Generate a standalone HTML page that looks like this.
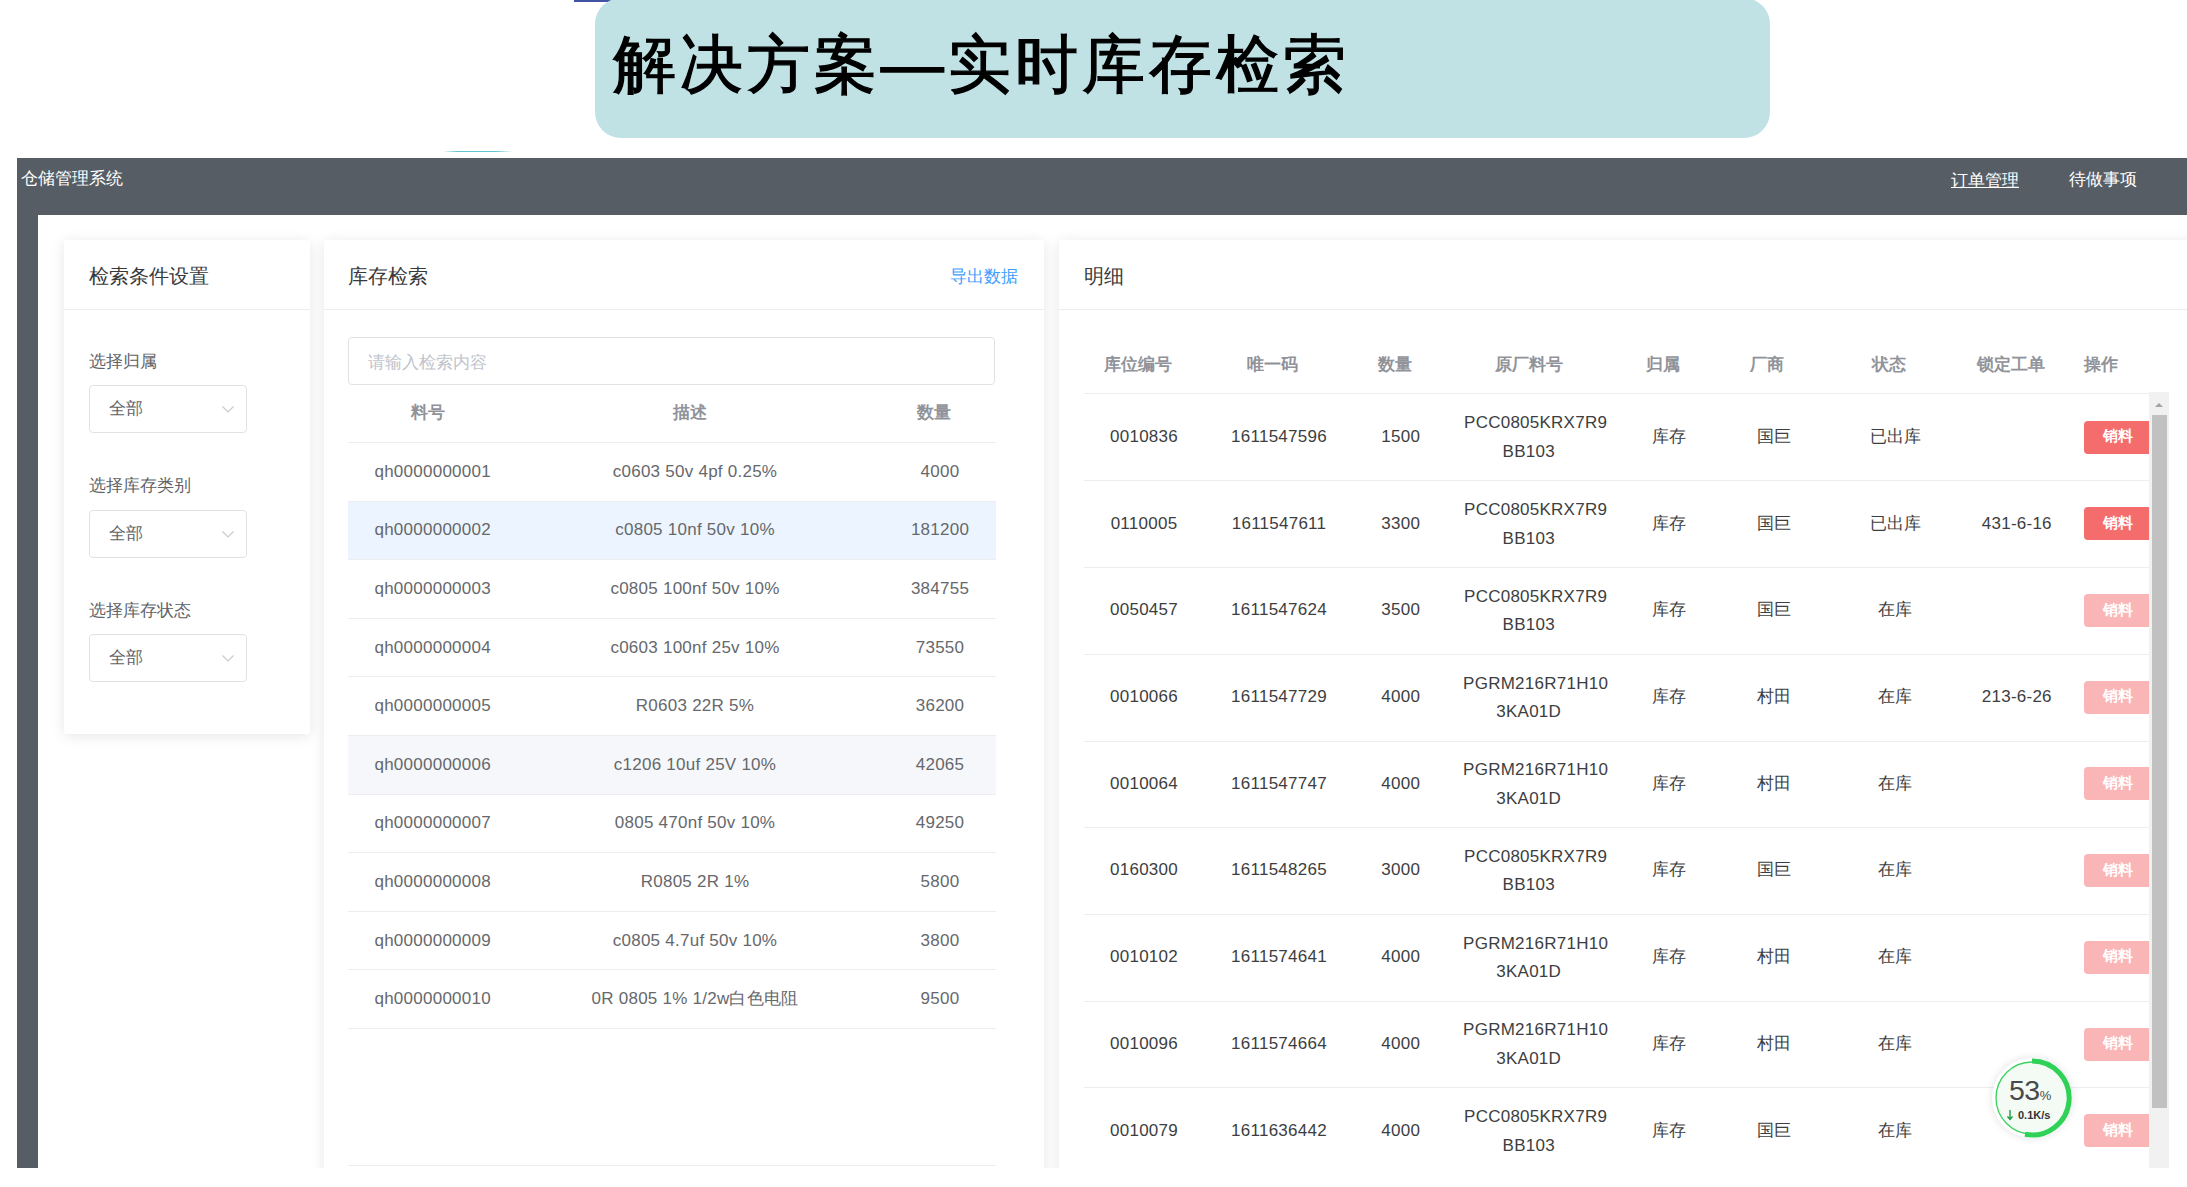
<!DOCTYPE html>
<html><head><meta charset="utf-8"><style>
html,body{margin:0;padding:0;}
body{width:2187px;height:1187px;position:relative;overflow:hidden;background:#fff;font-family:"Liberation Sans", sans-serif;}
.t{position:absolute;white-space:nowrap;letter-spacing:0.25px;}
</style></head><body>
<div style="position:absolute;left:574px;top:0px;width:40px;height:2px;background:#4353a3;"></div>
<div style="position:absolute;left:595px;top:-2px;width:1175px;height:140px;background:#c0e2e5;border-radius:26px;"></div>
<div class="t" style="left:613px;top:24.0px;line-height:80px;font-size:63px;color:#000;font-weight:normal;letter-spacing:3.95px;-webkit-text-stroke:1.3px #000;">解决方案—实时库存检索</div>
<div style="position:absolute;left:443px;top:151px;width:70px;height:1px;background:linear-gradient(90deg,rgba(120,220,235,0),#63c3cf 20%,#63c3cf 75%,rgba(120,220,235,0));"></div>
<div style="position:absolute;left:17px;top:158px;width:2170px;height:57px;background:#565d65;"></div>
<div style="position:absolute;left:17px;top:158px;width:21px;height:1010px;background:#565d65;"></div>
<div class="t" style="left:20.5px;top:166.5px;line-height:24px;font-size:17px;color:#fff;font-weight:normal;letter-spacing:0;">仓储管理系统</div>
<div class="t" style="left:1951px;top:168.5px;line-height:24px;font-size:17px;color:#fff;font-weight:normal;letter-spacing:0;"><u>订单管理</u></div>
<div class="t" style="left:2068.5px;top:167.5px;line-height:24px;font-size:17px;color:#fff;font-weight:normal;letter-spacing:0;">待做事项</div>
<div style="position:absolute;left:64px;top:240px;width:246px;height:494px;background:#fff;box-shadow:0 2px 14px rgba(0,0,0,0.10);border-radius:2px;"></div>
<div style="position:absolute;left:324px;top:240px;width:720px;height:960px;background:#fff;box-shadow:0 2px 14px rgba(0,0,0,0.10);border-radius:2px;"></div>
<div style="position:absolute;left:1059px;top:240px;width:1200px;height:960px;background:#fff;box-shadow:0 2px 14px rgba(0,0,0,0.10);border-radius:2px;"></div>
<div style="position:absolute;left:64px;top:309px;width:246px;height:1px;background:#ebedf0;"></div>
<div style="position:absolute;left:324px;top:309px;width:720px;height:1px;background:#ebedf0;"></div>
<div style="position:absolute;left:1058px;top:309px;width:1129px;height:1px;background:#ebedf0;"></div>
<div class="t" style="left:89px;top:262.0px;line-height:28px;font-size:19.5px;color:#38393b;font-weight:normal;letter-spacing:0;">检索条件设置</div>
<div class="t" style="left:348px;top:262.0px;line-height:28px;font-size:19.5px;color:#38393b;font-weight:normal;letter-spacing:0;">库存检索</div>
<div class="t" style="left:950px;top:264.8px;line-height:24px;font-size:17px;color:#409eff;font-weight:normal;letter-spacing:0;">导出数据</div>
<div class="t" style="left:1084px;top:262.0px;line-height:28px;font-size:19.5px;color:#38393b;font-weight:normal;letter-spacing:0;">明细</div>
<div class="t" style="left:89px;top:349.5px;line-height:24px;font-size:17px;color:#606266;font-weight:normal;letter-spacing:0;">选择归属</div>
<div style="position:absolute;left:89px;top:385px;width:158px;height:48px;border:1px solid #e0e2e6;border-radius:4px;box-sizing:border-box;background:#fff;"></div>
<div class="t" style="left:109px;top:397.0px;line-height:24px;font-size:17px;color:#606266;font-weight:normal;letter-spacing:0;">全部</div>
<svg style="position:absolute;left:221px;top:405.0px" width="14" height="9" viewBox="0 0 14 9"><path d="M1.5 1.5 L7 7 L12.5 1.5" stroke="#c8cbd0" stroke-width="1.2" fill="none"/></svg>
<div class="t" style="left:89px;top:474.2px;line-height:24px;font-size:17px;color:#606266;font-weight:normal;letter-spacing:0;">选择库存类别</div>
<div style="position:absolute;left:89px;top:510px;width:158px;height:48px;border:1px solid #e0e2e6;border-radius:4px;box-sizing:border-box;background:#fff;"></div>
<div class="t" style="left:109px;top:521.7px;line-height:24px;font-size:17px;color:#606266;font-weight:normal;letter-spacing:0;">全部</div>
<svg style="position:absolute;left:221px;top:529.7px" width="14" height="9" viewBox="0 0 14 9"><path d="M1.5 1.5 L7 7 L12.5 1.5" stroke="#c8cbd0" stroke-width="1.2" fill="none"/></svg>
<div class="t" style="left:89px;top:598.9px;line-height:24px;font-size:17px;color:#606266;font-weight:normal;letter-spacing:0;">选择库存状态</div>
<div style="position:absolute;left:89px;top:634px;width:158px;height:48px;border:1px solid #e0e2e6;border-radius:4px;box-sizing:border-box;background:#fff;"></div>
<div class="t" style="left:109px;top:646.4px;line-height:24px;font-size:17px;color:#606266;font-weight:normal;letter-spacing:0;">全部</div>
<svg style="position:absolute;left:221px;top:654.4px" width="14" height="9" viewBox="0 0 14 9"><path d="M1.5 1.5 L7 7 L12.5 1.5" stroke="#c8cbd0" stroke-width="1.2" fill="none"/></svg>
<div style="position:absolute;left:348px;top:337px;width:647px;height:48px;border:1px solid #e0e2e6;border-radius:4px;box-sizing:border-box;background:#fff;"></div>
<div class="t" style="left:368px;top:350.5px;line-height:24px;font-size:17px;color:#c0c4cc;font-weight:normal;letter-spacing:0;">请输入检索内容</div>
<div class="t" style="left:427.5px;top:399.5px;line-height:25px;font-size:17px;color:#909399;font-weight:bold;transform:translateX(-50%);letter-spacing:0;">料号</div>
<div class="t" style="left:690px;top:399.5px;line-height:25px;font-size:17px;color:#909399;font-weight:bold;transform:translateX(-50%);letter-spacing:0;">描述</div>
<div class="t" style="left:934px;top:399.5px;line-height:25px;font-size:17px;color:#909399;font-weight:bold;transform:translateX(-50%);letter-spacing:0;">数量</div>
<div style="position:absolute;left:348px;top:442px;width:648px;height:1px;background:#ebedf0;"></div>
<div style="position:absolute;left:348px;top:501px;width:648px;height:1px;background:#ebedf0;"></div>
<div class="t" style="left:432.7px;top:458.8px;line-height:25px;font-size:17px;color:#66686c;font-weight:normal;transform:translateX(-50%);">qh0000000001</div>
<div class="t" style="left:695px;top:458.8px;line-height:25px;font-size:17px;color:#66686c;font-weight:normal;transform:translateX(-50%);">c0603 50v 4pf 0.25%</div>
<div class="t" style="left:940px;top:458.8px;line-height:25px;font-size:17px;color:#66686c;font-weight:normal;transform:translateX(-50%);">4000</div>
<div style="position:absolute;left:348px;top:502px;width:648px;height:58px;background:#ecf5ff;"></div>
<div style="position:absolute;left:348px;top:559px;width:648px;height:1px;background:#ebedf0;"></div>
<div class="t" style="left:432.7px;top:517.4px;line-height:25px;font-size:17px;color:#66686c;font-weight:normal;transform:translateX(-50%);">qh0000000002</div>
<div class="t" style="left:695px;top:517.4px;line-height:25px;font-size:17px;color:#66686c;font-weight:normal;transform:translateX(-50%);">c0805 10nf 50v 10%</div>
<div class="t" style="left:940px;top:517.4px;line-height:25px;font-size:17px;color:#66686c;font-weight:normal;transform:translateX(-50%);">181200</div>
<div style="position:absolute;left:348px;top:618px;width:648px;height:1px;background:#ebedf0;"></div>
<div class="t" style="left:432.7px;top:576.0px;line-height:25px;font-size:17px;color:#66686c;font-weight:normal;transform:translateX(-50%);">qh0000000003</div>
<div class="t" style="left:695px;top:576.0px;line-height:25px;font-size:17px;color:#66686c;font-weight:normal;transform:translateX(-50%);">c0805 100nf 50v 10%</div>
<div class="t" style="left:940px;top:576.0px;line-height:25px;font-size:17px;color:#66686c;font-weight:normal;transform:translateX(-50%);">384755</div>
<div style="position:absolute;left:348px;top:676px;width:648px;height:1px;background:#ebedf0;"></div>
<div class="t" style="left:432.7px;top:634.6px;line-height:25px;font-size:17px;color:#66686c;font-weight:normal;transform:translateX(-50%);">qh0000000004</div>
<div class="t" style="left:695px;top:634.6px;line-height:25px;font-size:17px;color:#66686c;font-weight:normal;transform:translateX(-50%);">c0603 100nf 25v 10%</div>
<div class="t" style="left:940px;top:634.6px;line-height:25px;font-size:17px;color:#66686c;font-weight:normal;transform:translateX(-50%);">73550</div>
<div style="position:absolute;left:348px;top:735px;width:648px;height:1px;background:#ebedf0;"></div>
<div class="t" style="left:432.7px;top:693.2px;line-height:25px;font-size:17px;color:#66686c;font-weight:normal;transform:translateX(-50%);">qh0000000005</div>
<div class="t" style="left:695px;top:693.2px;line-height:25px;font-size:17px;color:#66686c;font-weight:normal;transform:translateX(-50%);">R0603 22R 5%</div>
<div class="t" style="left:940px;top:693.2px;line-height:25px;font-size:17px;color:#66686c;font-weight:normal;transform:translateX(-50%);">36200</div>
<div style="position:absolute;left:348px;top:736px;width:648px;height:59px;background:#f5f7fa;"></div>
<div style="position:absolute;left:348px;top:794px;width:648px;height:1px;background:#ebedf0;"></div>
<div class="t" style="left:432.7px;top:751.8px;line-height:25px;font-size:17px;color:#66686c;font-weight:normal;transform:translateX(-50%);">qh0000000006</div>
<div class="t" style="left:695px;top:751.8px;line-height:25px;font-size:17px;color:#66686c;font-weight:normal;transform:translateX(-50%);">c1206 10uf 25V 10%</div>
<div class="t" style="left:940px;top:751.8px;line-height:25px;font-size:17px;color:#66686c;font-weight:normal;transform:translateX(-50%);">42065</div>
<div style="position:absolute;left:348px;top:852px;width:648px;height:1px;background:#ebedf0;"></div>
<div class="t" style="left:432.7px;top:810.4px;line-height:25px;font-size:17px;color:#66686c;font-weight:normal;transform:translateX(-50%);">qh0000000007</div>
<div class="t" style="left:695px;top:810.4px;line-height:25px;font-size:17px;color:#66686c;font-weight:normal;transform:translateX(-50%);">0805 470nf 50v 10%</div>
<div class="t" style="left:940px;top:810.4px;line-height:25px;font-size:17px;color:#66686c;font-weight:normal;transform:translateX(-50%);">49250</div>
<div style="position:absolute;left:348px;top:911px;width:648px;height:1px;background:#ebedf0;"></div>
<div class="t" style="left:432.7px;top:869.0px;line-height:25px;font-size:17px;color:#66686c;font-weight:normal;transform:translateX(-50%);">qh0000000008</div>
<div class="t" style="left:695px;top:869.0px;line-height:25px;font-size:17px;color:#66686c;font-weight:normal;transform:translateX(-50%);">R0805 2R 1%</div>
<div class="t" style="left:940px;top:869.0px;line-height:25px;font-size:17px;color:#66686c;font-weight:normal;transform:translateX(-50%);">5800</div>
<div style="position:absolute;left:348px;top:969px;width:648px;height:1px;background:#ebedf0;"></div>
<div class="t" style="left:432.7px;top:927.6px;line-height:25px;font-size:17px;color:#66686c;font-weight:normal;transform:translateX(-50%);">qh0000000009</div>
<div class="t" style="left:695px;top:927.6px;line-height:25px;font-size:17px;color:#66686c;font-weight:normal;transform:translateX(-50%);">c0805 4.7uf 50v 10%</div>
<div class="t" style="left:940px;top:927.6px;line-height:25px;font-size:17px;color:#66686c;font-weight:normal;transform:translateX(-50%);">3800</div>
<div style="position:absolute;left:348px;top:1028px;width:648px;height:1px;background:#ebedf0;"></div>
<div class="t" style="left:432.7px;top:986.2px;line-height:25px;font-size:17px;color:#66686c;font-weight:normal;transform:translateX(-50%);">qh0000000010</div>
<div class="t" style="left:695px;top:986.2px;line-height:25px;font-size:17px;color:#66686c;font-weight:normal;transform:translateX(-50%);">0R 0805 1% 1/2w白色电阻</div>
<div class="t" style="left:940px;top:986.2px;line-height:25px;font-size:17px;color:#66686c;font-weight:normal;transform:translateX(-50%);">9500</div>
<div style="position:absolute;left:348px;top:1165px;width:648px;height:1px;background:#ebedf0;"></div>
<div class="t" style="left:1138px;top:351.5px;line-height:25px;font-size:17px;color:#909399;font-weight:bold;transform:translateX(-50%);letter-spacing:0;">库位编号</div>
<div class="t" style="left:1272px;top:351.5px;line-height:25px;font-size:17px;color:#909399;font-weight:bold;transform:translateX(-50%);letter-spacing:0;">唯一码</div>
<div class="t" style="left:1394.5px;top:351.5px;line-height:25px;font-size:17px;color:#909399;font-weight:bold;transform:translateX(-50%);letter-spacing:0;">数量</div>
<div class="t" style="left:1529px;top:351.5px;line-height:25px;font-size:17px;color:#909399;font-weight:bold;transform:translateX(-50%);letter-spacing:0;">原厂料号</div>
<div class="t" style="left:1663px;top:351.5px;line-height:25px;font-size:17px;color:#909399;font-weight:bold;transform:translateX(-50%);letter-spacing:0;">归属</div>
<div class="t" style="left:1767px;top:351.5px;line-height:25px;font-size:17px;color:#909399;font-weight:bold;transform:translateX(-50%);letter-spacing:0;">厂商</div>
<div class="t" style="left:1888.8px;top:351.5px;line-height:25px;font-size:17px;color:#909399;font-weight:bold;transform:translateX(-50%);letter-spacing:0;">状态</div>
<div class="t" style="left:2011px;top:351.5px;line-height:25px;font-size:17px;color:#909399;font-weight:bold;transform:translateX(-50%);letter-spacing:0;">锁定工单</div>
<div class="t" style="left:2084px;top:351.5px;line-height:25px;font-size:17px;color:#909399;font-weight:bold;letter-spacing:0;">操作</div>
<div style="position:absolute;left:1084px;top:393px;width:1066px;height:1px;background:#ebedf0;"></div>
<div style="position:absolute;left:1084px;top:480px;width:1065px;height:1px;background:#ebedf0;"></div>
<div class="t" style="left:1144px;top:423.9px;line-height:25px;font-size:17px;color:#3d3e41;font-weight:normal;transform:translateX(-50%);">0010836</div>
<div class="t" style="left:1279px;top:423.9px;line-height:25px;font-size:17px;color:#3d3e41;font-weight:normal;transform:translateX(-50%);">1611547596</div>
<div class="t" style="left:1400.7px;top:423.9px;line-height:25px;font-size:17px;color:#3d3e41;font-weight:normal;transform:translateX(-50%);">1500</div>
<div class="t" style="left:1535.6px;top:410.4px;line-height:25px;font-size:17px;color:#3d3e41;font-weight:normal;transform:translateX(-50%);">PCC0805KRX7R9</div>
<div class="t" style="left:1528.7px;top:439.0px;line-height:25px;font-size:17px;color:#3d3e41;font-weight:normal;transform:translateX(-50%);">BB103</div>
<div class="t" style="left:1669px;top:423.9px;line-height:25px;font-size:17px;color:#3d3e41;font-weight:normal;transform:translateX(-50%);letter-spacing:0;">库存</div>
<div class="t" style="left:1773.5px;top:423.9px;line-height:25px;font-size:17px;color:#3d3e41;font-weight:normal;transform:translateX(-50%);letter-spacing:0;">国巨</div>
<div class="t" style="left:1895px;top:423.9px;line-height:25px;font-size:17px;color:#3d3e41;font-weight:normal;transform:translateX(-50%);letter-spacing:0;">已出库</div>
<div style="position:absolute;left:2084px;top:421px;width:70px;height:33px;background:#f56c6c;border-radius:4px;"></div>
<div class="t" style="left:2118px;top:426.2px;line-height:21px;font-size:14.5px;color:#fff;font-weight:600;transform:translateX(-50%);letter-spacing:0;">销料</div>
<div style="position:absolute;left:1084px;top:567px;width:1065px;height:1px;background:#ebedf0;"></div>
<div class="t" style="left:1144px;top:510.6px;line-height:25px;font-size:17px;color:#3d3e41;font-weight:normal;transform:translateX(-50%);">0110005</div>
<div class="t" style="left:1279px;top:510.6px;line-height:25px;font-size:17px;color:#3d3e41;font-weight:normal;transform:translateX(-50%);">1611547611</div>
<div class="t" style="left:1400.7px;top:510.6px;line-height:25px;font-size:17px;color:#3d3e41;font-weight:normal;transform:translateX(-50%);">3300</div>
<div class="t" style="left:1535.6px;top:497.1px;line-height:25px;font-size:17px;color:#3d3e41;font-weight:normal;transform:translateX(-50%);">PCC0805KRX7R9</div>
<div class="t" style="left:1528.7px;top:525.6px;line-height:25px;font-size:17px;color:#3d3e41;font-weight:normal;transform:translateX(-50%);">BB103</div>
<div class="t" style="left:1669px;top:510.6px;line-height:25px;font-size:17px;color:#3d3e41;font-weight:normal;transform:translateX(-50%);letter-spacing:0;">库存</div>
<div class="t" style="left:1773.5px;top:510.6px;line-height:25px;font-size:17px;color:#3d3e41;font-weight:normal;transform:translateX(-50%);letter-spacing:0;">国巨</div>
<div class="t" style="left:1895px;top:510.6px;line-height:25px;font-size:17px;color:#3d3e41;font-weight:normal;transform:translateX(-50%);letter-spacing:0;">已出库</div>
<div class="t" style="left:2016.8px;top:510.6px;line-height:25px;font-size:17px;color:#3d3e41;font-weight:normal;transform:translateX(-50%);">431-6-16</div>
<div style="position:absolute;left:2084px;top:507px;width:70px;height:33px;background:#f56c6c;border-radius:4px;"></div>
<div class="t" style="left:2118px;top:512.9px;line-height:21px;font-size:14.5px;color:#fff;font-weight:600;transform:translateX(-50%);letter-spacing:0;">销料</div>
<div style="position:absolute;left:1084px;top:654px;width:1065px;height:1px;background:#ebedf0;"></div>
<div class="t" style="left:1144px;top:597.3px;line-height:25px;font-size:17px;color:#3d3e41;font-weight:normal;transform:translateX(-50%);">0050457</div>
<div class="t" style="left:1279px;top:597.3px;line-height:25px;font-size:17px;color:#3d3e41;font-weight:normal;transform:translateX(-50%);">1611547624</div>
<div class="t" style="left:1400.7px;top:597.3px;line-height:25px;font-size:17px;color:#3d3e41;font-weight:normal;transform:translateX(-50%);">3500</div>
<div class="t" style="left:1535.6px;top:583.8px;line-height:25px;font-size:17px;color:#3d3e41;font-weight:normal;transform:translateX(-50%);">PCC0805KRX7R9</div>
<div class="t" style="left:1528.7px;top:612.4px;line-height:25px;font-size:17px;color:#3d3e41;font-weight:normal;transform:translateX(-50%);">BB103</div>
<div class="t" style="left:1669px;top:597.3px;line-height:25px;font-size:17px;color:#3d3e41;font-weight:normal;transform:translateX(-50%);letter-spacing:0;">库存</div>
<div class="t" style="left:1773.5px;top:597.3px;line-height:25px;font-size:17px;color:#3d3e41;font-weight:normal;transform:translateX(-50%);letter-spacing:0;">国巨</div>
<div class="t" style="left:1895px;top:597.3px;line-height:25px;font-size:17px;color:#3d3e41;font-weight:normal;transform:translateX(-50%);letter-spacing:0;">在库</div>
<div style="position:absolute;left:2084px;top:594px;width:70px;height:33px;background:#fab6b6;border-radius:4px;"></div>
<div class="t" style="left:2118px;top:599.6px;line-height:21px;font-size:14.5px;color:#fff;font-weight:600;transform:translateX(-50%);letter-spacing:0;">销料</div>
<div style="position:absolute;left:1084px;top:741px;width:1065px;height:1px;background:#ebedf0;"></div>
<div class="t" style="left:1144px;top:684.0px;line-height:25px;font-size:17px;color:#3d3e41;font-weight:normal;transform:translateX(-50%);">0010066</div>
<div class="t" style="left:1279px;top:684.0px;line-height:25px;font-size:17px;color:#3d3e41;font-weight:normal;transform:translateX(-50%);">1611547729</div>
<div class="t" style="left:1400.7px;top:684.0px;line-height:25px;font-size:17px;color:#3d3e41;font-weight:normal;transform:translateX(-50%);">4000</div>
<div class="t" style="left:1535.6px;top:670.5px;line-height:25px;font-size:17px;color:#3d3e41;font-weight:normal;transform:translateX(-50%);">PGRM216R71H10</div>
<div class="t" style="left:1528.7px;top:699.1px;line-height:25px;font-size:17px;color:#3d3e41;font-weight:normal;transform:translateX(-50%);">3KA01D</div>
<div class="t" style="left:1669px;top:684.0px;line-height:25px;font-size:17px;color:#3d3e41;font-weight:normal;transform:translateX(-50%);letter-spacing:0;">库存</div>
<div class="t" style="left:1773.5px;top:684.0px;line-height:25px;font-size:17px;color:#3d3e41;font-weight:normal;transform:translateX(-50%);letter-spacing:0;">村田</div>
<div class="t" style="left:1895px;top:684.0px;line-height:25px;font-size:17px;color:#3d3e41;font-weight:normal;transform:translateX(-50%);letter-spacing:0;">在库</div>
<div class="t" style="left:2016.8px;top:684.0px;line-height:25px;font-size:17px;color:#3d3e41;font-weight:normal;transform:translateX(-50%);">213-6-26</div>
<div style="position:absolute;left:2084px;top:681px;width:70px;height:33px;background:#fab6b6;border-radius:4px;"></div>
<div class="t" style="left:2118px;top:686.3px;line-height:21px;font-size:14.5px;color:#fff;font-weight:600;transform:translateX(-50%);letter-spacing:0;">销料</div>
<div style="position:absolute;left:1084px;top:827px;width:1065px;height:1px;background:#ebedf0;"></div>
<div class="t" style="left:1144px;top:770.7px;line-height:25px;font-size:17px;color:#3d3e41;font-weight:normal;transform:translateX(-50%);">0010064</div>
<div class="t" style="left:1279px;top:770.7px;line-height:25px;font-size:17px;color:#3d3e41;font-weight:normal;transform:translateX(-50%);">1611547747</div>
<div class="t" style="left:1400.7px;top:770.7px;line-height:25px;font-size:17px;color:#3d3e41;font-weight:normal;transform:translateX(-50%);">4000</div>
<div class="t" style="left:1535.6px;top:757.2px;line-height:25px;font-size:17px;color:#3d3e41;font-weight:normal;transform:translateX(-50%);">PGRM216R71H10</div>
<div class="t" style="left:1528.7px;top:785.8px;line-height:25px;font-size:17px;color:#3d3e41;font-weight:normal;transform:translateX(-50%);">3KA01D</div>
<div class="t" style="left:1669px;top:770.7px;line-height:25px;font-size:17px;color:#3d3e41;font-weight:normal;transform:translateX(-50%);letter-spacing:0;">库存</div>
<div class="t" style="left:1773.5px;top:770.7px;line-height:25px;font-size:17px;color:#3d3e41;font-weight:normal;transform:translateX(-50%);letter-spacing:0;">村田</div>
<div class="t" style="left:1895px;top:770.7px;line-height:25px;font-size:17px;color:#3d3e41;font-weight:normal;transform:translateX(-50%);letter-spacing:0;">在库</div>
<div style="position:absolute;left:2084px;top:767px;width:70px;height:33px;background:#fab6b6;border-radius:4px;"></div>
<div class="t" style="left:2118px;top:773.0px;line-height:21px;font-size:14.5px;color:#fff;font-weight:600;transform:translateX(-50%);letter-spacing:0;">销料</div>
<div style="position:absolute;left:1084px;top:914px;width:1065px;height:1px;background:#ebedf0;"></div>
<div class="t" style="left:1144px;top:857.4px;line-height:25px;font-size:17px;color:#3d3e41;font-weight:normal;transform:translateX(-50%);">0160300</div>
<div class="t" style="left:1279px;top:857.4px;line-height:25px;font-size:17px;color:#3d3e41;font-weight:normal;transform:translateX(-50%);">1611548265</div>
<div class="t" style="left:1400.7px;top:857.4px;line-height:25px;font-size:17px;color:#3d3e41;font-weight:normal;transform:translateX(-50%);">3000</div>
<div class="t" style="left:1535.6px;top:843.9px;line-height:25px;font-size:17px;color:#3d3e41;font-weight:normal;transform:translateX(-50%);">PCC0805KRX7R9</div>
<div class="t" style="left:1528.7px;top:872.4px;line-height:25px;font-size:17px;color:#3d3e41;font-weight:normal;transform:translateX(-50%);">BB103</div>
<div class="t" style="left:1669px;top:857.4px;line-height:25px;font-size:17px;color:#3d3e41;font-weight:normal;transform:translateX(-50%);letter-spacing:0;">库存</div>
<div class="t" style="left:1773.5px;top:857.4px;line-height:25px;font-size:17px;color:#3d3e41;font-weight:normal;transform:translateX(-50%);letter-spacing:0;">国巨</div>
<div class="t" style="left:1895px;top:857.4px;line-height:25px;font-size:17px;color:#3d3e41;font-weight:normal;transform:translateX(-50%);letter-spacing:0;">在库</div>
<div style="position:absolute;left:2084px;top:854px;width:70px;height:33px;background:#fab6b6;border-radius:4px;"></div>
<div class="t" style="left:2118px;top:859.6px;line-height:21px;font-size:14.5px;color:#fff;font-weight:600;transform:translateX(-50%);letter-spacing:0;">销料</div>
<div style="position:absolute;left:1084px;top:1001px;width:1065px;height:1px;background:#ebedf0;"></div>
<div class="t" style="left:1144px;top:944.1px;line-height:25px;font-size:17px;color:#3d3e41;font-weight:normal;transform:translateX(-50%);">0010102</div>
<div class="t" style="left:1279px;top:944.1px;line-height:25px;font-size:17px;color:#3d3e41;font-weight:normal;transform:translateX(-50%);">1611574641</div>
<div class="t" style="left:1400.7px;top:944.1px;line-height:25px;font-size:17px;color:#3d3e41;font-weight:normal;transform:translateX(-50%);">4000</div>
<div class="t" style="left:1535.6px;top:930.6px;line-height:25px;font-size:17px;color:#3d3e41;font-weight:normal;transform:translateX(-50%);">PGRM216R71H10</div>
<div class="t" style="left:1528.7px;top:959.1px;line-height:25px;font-size:17px;color:#3d3e41;font-weight:normal;transform:translateX(-50%);">3KA01D</div>
<div class="t" style="left:1669px;top:944.1px;line-height:25px;font-size:17px;color:#3d3e41;font-weight:normal;transform:translateX(-50%);letter-spacing:0;">库存</div>
<div class="t" style="left:1773.5px;top:944.1px;line-height:25px;font-size:17px;color:#3d3e41;font-weight:normal;transform:translateX(-50%);letter-spacing:0;">村田</div>
<div class="t" style="left:1895px;top:944.1px;line-height:25px;font-size:17px;color:#3d3e41;font-weight:normal;transform:translateX(-50%);letter-spacing:0;">在库</div>
<div style="position:absolute;left:2084px;top:941px;width:70px;height:33px;background:#fab6b6;border-radius:4px;"></div>
<div class="t" style="left:2118px;top:946.4px;line-height:21px;font-size:14.5px;color:#fff;font-weight:600;transform:translateX(-50%);letter-spacing:0;">销料</div>
<div style="position:absolute;left:1084px;top:1087px;width:1065px;height:1px;background:#ebedf0;"></div>
<div class="t" style="left:1144px;top:1030.8px;line-height:25px;font-size:17px;color:#3d3e41;font-weight:normal;transform:translateX(-50%);">0010096</div>
<div class="t" style="left:1279px;top:1030.8px;line-height:25px;font-size:17px;color:#3d3e41;font-weight:normal;transform:translateX(-50%);">1611574664</div>
<div class="t" style="left:1400.7px;top:1030.8px;line-height:25px;font-size:17px;color:#3d3e41;font-weight:normal;transform:translateX(-50%);">4000</div>
<div class="t" style="left:1535.6px;top:1017.2px;line-height:25px;font-size:17px;color:#3d3e41;font-weight:normal;transform:translateX(-50%);">PGRM216R71H10</div>
<div class="t" style="left:1528.7px;top:1045.8px;line-height:25px;font-size:17px;color:#3d3e41;font-weight:normal;transform:translateX(-50%);">3KA01D</div>
<div class="t" style="left:1669px;top:1030.8px;line-height:25px;font-size:17px;color:#3d3e41;font-weight:normal;transform:translateX(-50%);letter-spacing:0;">库存</div>
<div class="t" style="left:1773.5px;top:1030.8px;line-height:25px;font-size:17px;color:#3d3e41;font-weight:normal;transform:translateX(-50%);letter-spacing:0;">村田</div>
<div class="t" style="left:1895px;top:1030.8px;line-height:25px;font-size:17px;color:#3d3e41;font-weight:normal;transform:translateX(-50%);letter-spacing:0;">在库</div>
<div style="position:absolute;left:2084px;top:1028px;width:70px;height:33px;background:#fab6b6;border-radius:4px;"></div>
<div class="t" style="left:2118px;top:1033.0px;line-height:21px;font-size:14.5px;color:#fff;font-weight:600;transform:translateX(-50%);letter-spacing:0;">销料</div>
<div class="t" style="left:1144px;top:1117.5px;line-height:25px;font-size:17px;color:#3d3e41;font-weight:normal;transform:translateX(-50%);">0010079</div>
<div class="t" style="left:1279px;top:1117.5px;line-height:25px;font-size:17px;color:#3d3e41;font-weight:normal;transform:translateX(-50%);">1611636442</div>
<div class="t" style="left:1400.7px;top:1117.5px;line-height:25px;font-size:17px;color:#3d3e41;font-weight:normal;transform:translateX(-50%);">4000</div>
<div class="t" style="left:1535.6px;top:1104.0px;line-height:25px;font-size:17px;color:#3d3e41;font-weight:normal;transform:translateX(-50%);">PCC0805KRX7R9</div>
<div class="t" style="left:1528.7px;top:1132.5px;line-height:25px;font-size:17px;color:#3d3e41;font-weight:normal;transform:translateX(-50%);">BB103</div>
<div class="t" style="left:1669px;top:1117.5px;line-height:25px;font-size:17px;color:#3d3e41;font-weight:normal;transform:translateX(-50%);letter-spacing:0;">库存</div>
<div class="t" style="left:1773.5px;top:1117.5px;line-height:25px;font-size:17px;color:#3d3e41;font-weight:normal;transform:translateX(-50%);letter-spacing:0;">国巨</div>
<div class="t" style="left:1895px;top:1117.5px;line-height:25px;font-size:17px;color:#3d3e41;font-weight:normal;transform:translateX(-50%);letter-spacing:0;">在库</div>
<div style="position:absolute;left:2084px;top:1114px;width:70px;height:33px;background:#fab6b6;border-radius:4px;"></div>
<div class="t" style="left:2118px;top:1119.8px;line-height:21px;font-size:14.5px;color:#fff;font-weight:600;transform:translateX(-50%);letter-spacing:0;">销料</div>
<div style="position:absolute;left:2149px;top:392px;width:20px;height:776px;background:#f1f1f1;"></div>
<div style="position:absolute;left:2151.5px;top:415px;width:15.5px;height:693px;background:#c1c1c1;"></div>
<svg style="position:absolute;left:2153px;top:400px" width="12" height="10" viewBox="0 0 12 10"><path d="M2 7 L6 3 L10 7 Z" fill="#a3a3a3"/></svg>
<div style="position:absolute;left:0px;top:1168px;width:2187px;height:19px;background:#fff;"></div>
<div style="position:absolute;left:1992px;top:1058px;width:80px;height:80px;border-radius:50%;background:#fff;box-shadow:0 0 8px rgba(0,0,0,0.12);"></div>
<svg style="position:absolute;left:1992px;top:1058px" width="80" height="80" viewBox="0 0 80 80">
<circle cx="40" cy="40" r="36" fill="#f3fbf4" stroke="#3ad15f" stroke-width="1.3"/>
<path d="M40 3 A37 37 0 1 1 33 76.3" stroke="#2fd157" stroke-width="5" fill="none"/>
</svg>
<div class="t" style="left:2009px;top:1075.0px;line-height:30px;font-size:28.5px;color:#4a4a4a;font-weight:normal;letter-spacing:-0.5px;">53<span style="font-size:13px;letter-spacing:0">%</span></div>
<svg style="position:absolute;left:2006px;top:1109px" width="8" height="12" viewBox="0 0 8 12"><path d="M4 1 V10 M1.5 7.5 L4 10.5 L6.5 7.5" stroke="#1f9d45" stroke-width="1.4" fill="none"/></svg>
<div class="t" style="left:2018px;top:1108.5px;line-height:12px;font-size:11px;color:#333;font-weight:bold;letter-spacing:0;">0.1K/s</div>
</body></html>
